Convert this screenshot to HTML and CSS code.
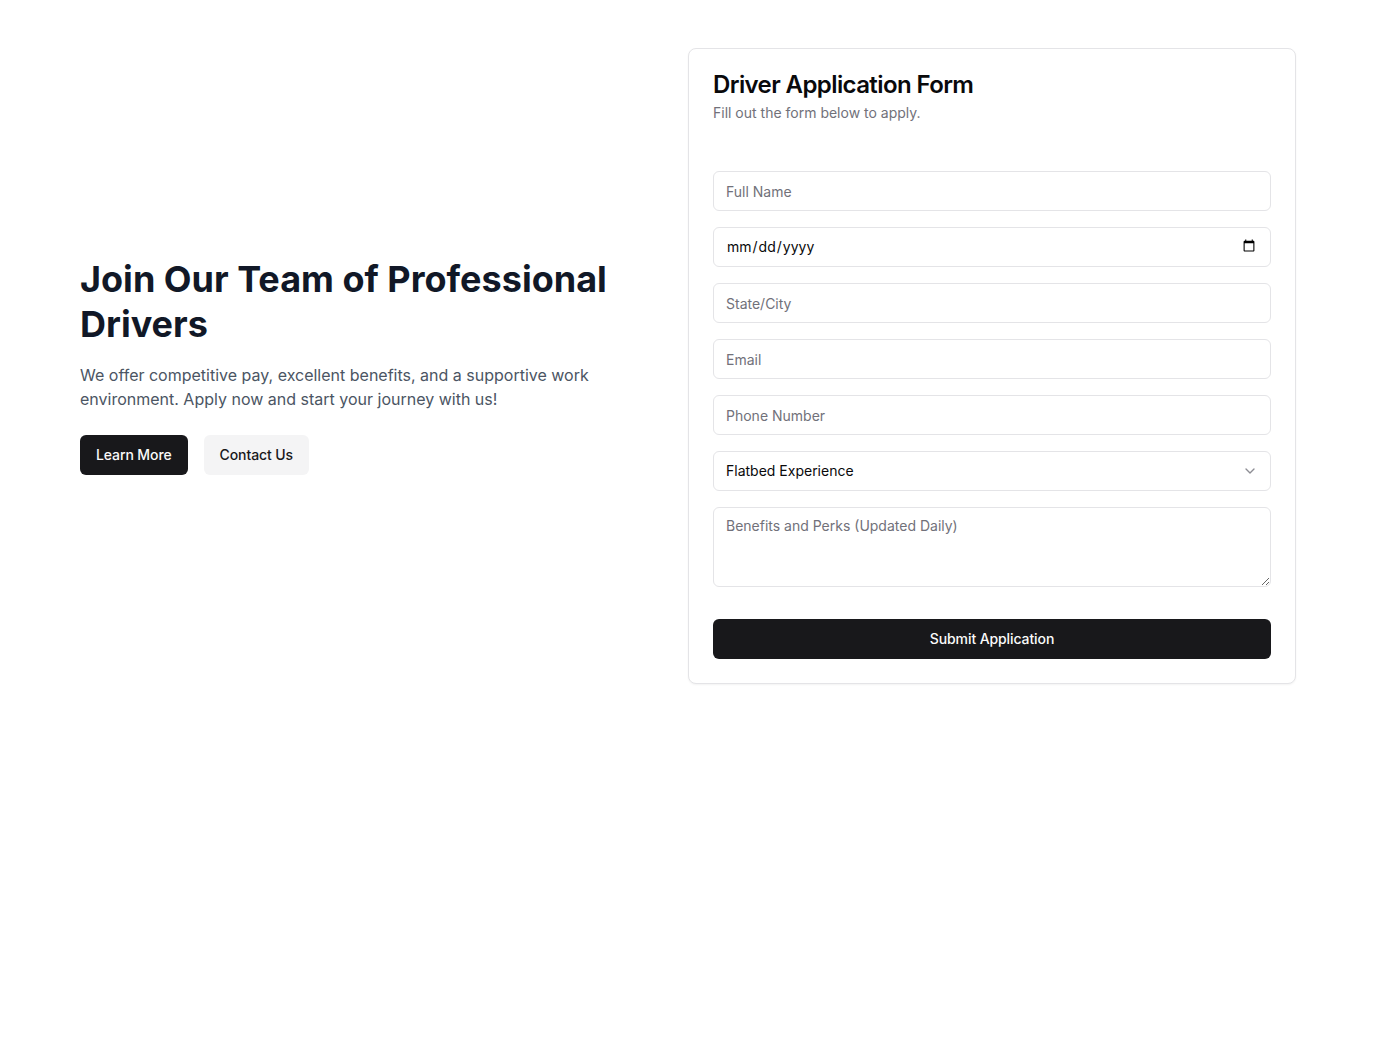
FILE: index.html
```html
<!DOCTYPE html>
<html lang="en">
<head>
<meta charset="utf-8">
<title>Driver Application</title>
<link rel="stylesheet" href="styles.css">
</head>
<body>
<main class="page">
  <section class="hero">
    <h1 class="hero-title">Join Our Team of Professional Drivers</h1>
    <p class="hero-text">We offer competitive pay, excellent benefits, and a supportive work environment. Apply now and start your journey with us!</p>
    <div class="hero-actions">
      <button class="btn btn-dark" type="button">Learn More</button>
      <button class="btn btn-light" type="button">Contact Us</button>
    </div>
  </section>
  <section class="card">
    <div class="card-header">
      <h2 class="card-title">Driver Application Form</h2>
      <p class="card-desc">Fill out the form below to apply.</p>
    </div>
    <form class="form">
      <input class="field" type="text" placeholder="Full Name">
      <input class="field field-date" type="date">
      <input class="field" type="text" placeholder="State/City">
      <input class="field" type="email" placeholder="Email">
      <input class="field" type="tel" placeholder="Phone Number">
      <button class="field select" type="button">
        <span>Flatbed Experience</span>
        <svg class="chev" width="16" height="16" viewBox="0 0 24 24" fill="none" stroke="currentColor" stroke-width="2" stroke-linecap="round" stroke-linejoin="round"><path d="m6 9 6 6 6-6"/></svg>
      </button>
      <textarea class="field area" placeholder="Benefits and Perks (Updated Daily)"></textarea>
      <button class="btn btn-dark submit" type="submit">Submit Application</button>
    </form>
  </section>
</main>
</body>
</html>
```
FILE: styles.css
```css
* { box-sizing: border-box; }
html, body { margin: 0; padding: 0; background: #fff; }
body {
  font-family: Inter, "Noto Sans", sans-serif;
  color: #09090b;
}
.page {
  display: grid;
  grid-template-columns: 576px 608px;
  column-gap: 32px;
  align-items: center;
  padding: 48px 80px;
}
.hero-title {
  margin: 0;
  font-size: 36px;
  line-height: 45px;
  font-weight: 700;
  color: #111827;
}
.hero-text {
  margin: 16px 0 0;
  font-size: 16px;
  line-height: 24px;
  color: #4b5563;
}
.hero-actions {
  display: flex;
  gap: 16px;
  margin-top: 24px;
}
.btn {
  display: inline-flex;
  align-items: center;
  justify-content: center;
  height: 40px;
  padding: 0 16px 1px;
  border: 0;
  border-radius: 6px;
  font-family: Inter, "Noto Sans", sans-serif;
  font-size: 14px;
  line-height: 20px;
  font-weight: 500;
  letter-spacing: -0.1px;
  cursor: pointer;
}
.btn-dark { background: #18181b; color: #fafafa; }
.btn-light { background: #f4f4f5; color: #18181b; }
.card {
  border: 1px solid #e4e4e7;
  border-radius: 8px;
  background: #fff;
  box-shadow: 0 1px 2px rgba(0,0,0,0.05);
  padding: 24px;
}
.card-header { display: flex; flex-direction: column; gap: 6px; }
.card-title {
  margin: 0;
  font-size: 24px;
  line-height: 24px;
  font-weight: 600;
  letter-spacing: -0.6px;
}
.card-desc {
  margin: 0;
  font-size: 14px;
  line-height: 20px;
  color: #71717a;
}
.form {
  display: flex;
  flex-direction: column;
  gap: 16px;
  margin-top: 48px;
}
.field {
  width: 100%;
  height: 40px;
  border: 1px solid #e4e4e7;
  border-radius: 6px;
  background: #fff;
  padding: 8px 12px;
  font-family: Inter, "Noto Sans", sans-serif;
  font-size: 14px;
  color: #09090b;
  outline: none;
}
.field::placeholder { color: #71717a; }
.field-date { color: #09090b; padding-bottom: 9px; padding-top: 7px; }
.select {
  display: flex;
  align-items: center;
  justify-content: space-between;
  text-align: left;
  padding-bottom: 9px;
  padding-top: 7px;
}
.chev { color: #71717a; opacity: 0.8; margin-top: 1px; }
.area { height: 80px; resize: vertical; padding-top: 9px; }
.submit { width: 100%; margin-top: 16px; }
```
